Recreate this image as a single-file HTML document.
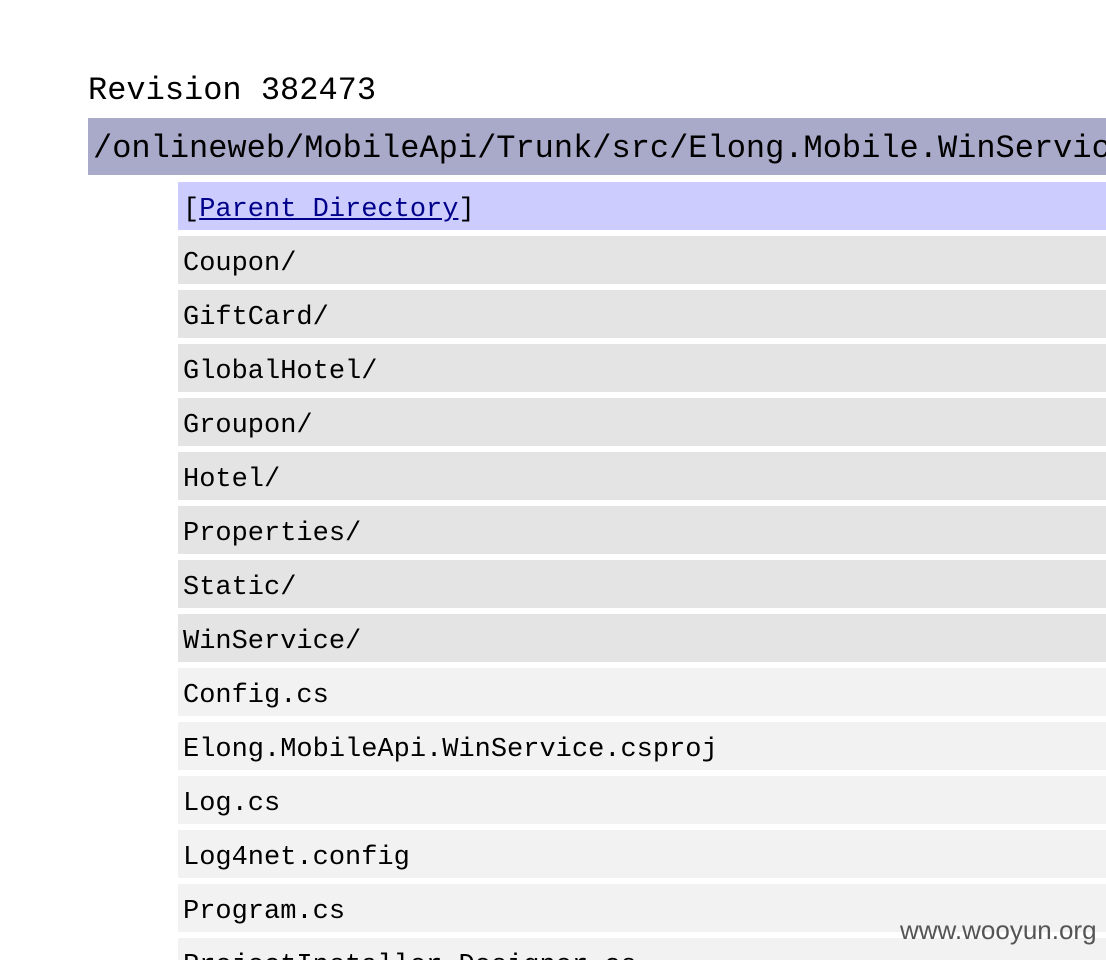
<!DOCTYPE html>
<html><head><meta charset="utf-8"><style>
html,body{margin:0;padding:0;background:#fff;width:1106px;height:960px;overflow:hidden;position:relative}
body{font-family:"Liberation Mono","Noto Sans CJK SC",monospace;color:#000}
.rev{position:absolute;left:88px;top:71px;font-size:32px;line-height:40px;white-space:nowrap}
.path{position:absolute;left:88px;top:118px;width:1100px;height:57px;background:#a9a9c9;font-size:32px;line-height:61px;padding-left:5px;white-space:nowrap;overflow:hidden}
.row{position:absolute;left:178px;width:940px;height:48px;font-size:27px;line-height:56px;padding-left:5px;white-space:nowrap;overflow:hidden}
.p{background:#ccccff}.d{background:#e4e4e4}.f{background:#f2f2f2}
a{color:#00008b;text-decoration:underline}
.wm{position:absolute;left:900px;top:915px;font-family:"Liberation Sans",sans-serif;font-size:26px;color:#555}
</style></head><body>
<div class="rev">Revision 382473</div>
<div class="path">/onlineweb/MobileApi/Trunk/src/Elong.Mobile.WinService/</div>
<div class="row p" style="top:182px">[<a>Parent Directory</a>]</div>
<div class="row d" style="top:236px">Coupon/</div>
<div class="row d" style="top:290px">GiftCard/</div>
<div class="row d" style="top:344px">GlobalHotel/</div>
<div class="row d" style="top:398px">Groupon/</div>
<div class="row d" style="top:452px">Hotel/</div>
<div class="row d" style="top:506px">Properties/</div>
<div class="row d" style="top:560px">Static/</div>
<div class="row d" style="top:614px">WinService/</div>
<div class="row f" style="top:668px">Config.cs</div>
<div class="row f" style="top:722px">Elong.MobileApi.WinService.csproj</div>
<div class="row f" style="top:776px">Log.cs</div>
<div class="row f" style="top:830px">Log4net.config</div>
<div class="row f" style="top:884px">Program.cs</div>
<div class="row f" style="top:938px">ProjectInstaller.Designer.cs</div>
<div class="wm">www.wooyun.org</div>
</body></html>
